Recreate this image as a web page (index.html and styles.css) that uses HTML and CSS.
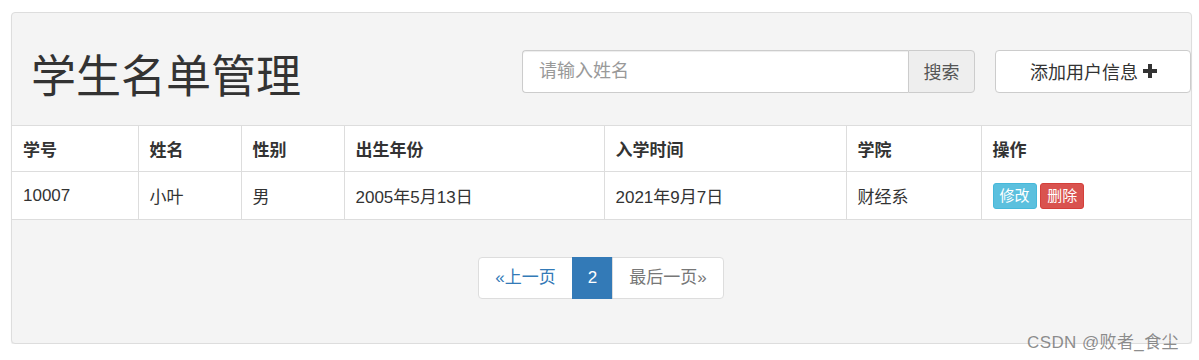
FILE: index.html
```html
<!DOCTYPE html>
<html lang="zh-CN">
<head>
    <meta charset="UTF-8">
    <title>学生名单管理</title>
    <link rel="stylesheet" href="styles.css">
</head>
<body>
    <div class="panel">
        <!-- Header: title, search and add -->
        <div class="panel-head">
            <h1 class="title">学生名单管理</h1>
            <div class="search-group">
                <input type="text" class="search-input" placeholder="请输入姓名">
                <button class="search-button">搜索</button>
            </div>
            <button class="add-button">添加用户信息
                <svg class="plus" viewBox="0 0 16 16" width="16" height="16"><path d="M6 1h4v5h5v4h-5v5H6v-5H1V6h5z" fill="#333"/></svg>
            </button>
        </div>

        <table class="student-table">
            <colgroup>
                <col style="width:126px"><col style="width:103px"><col style="width:103px">
                <col style="width:260px"><col style="width:242px"><col style="width:135px"><col>
            </colgroup>
            <thead>
                <tr>
                    <th>学号</th><th>姓名</th><th>性别</th><th>出生年份</th><th>入学时间</th><th>学院</th><th>操作</th>
                </tr>
            </thead>
            <tbody>
                <tr>
                    <td>10007</td><td>小叶</td><td>男</td><td>2005年5月13日</td><td>2021年9月7日</td><td>财经系</td>
                    <td><button class="btn-xs btn-info">修改</button> <button class="btn-xs btn-danger">删除</button></td>
                </tr>
            </tbody>
        </table>

        <div class="pager-wrap">
            <ul class="pagination">
                <li><a href="#" class="page-link">«上一页</a></li>
                <li><a href="#" class="page-link active">2</a></li>
                <li><a href="#" class="page-link muted">最后一页»</a></li>
            </ul>
        </div>
    </div>

    <div class="watermark">CSDN @败者_食尘</div>
</body>
</html>
```

FILE: styles.css
```css
body {
    margin: 0;
    padding: 12px 7px 0 11px;
    font-family: "Liberation Sans", "Noto Sans CJK SC", sans-serif;
    font-size: 16px;
    color: #333;
    background-color: #fff;
}
.panel {
    width: 1179px;
    height: 330px;
    background-color: #f4f4f4;
    border: 1px solid #ddd;
    border-radius: 4px;
    box-shadow: 0 1px 1px rgba(0, 0, 0, 0.08);
}
.panel-head {
    display: flex;
    align-items: center;
    height: 112px;
    padding: 0 0 0 19px;
}
.title {
    margin: 0;
    flex: 1;
    font-family: "Noto Sans CJK SC", sans-serif;
    font-size: 45px;
    font-weight: 400;
    line-height: 1;
    color: #333;
    padding-top: 8px;
}
.search-group {
    display: flex;
    width: 453px;
    height: 43px;
    margin: 4px 20px 0 0;
}
.search-input {
    flex: 1;
    min-width: 0;
    border: 1px solid #ccc;
    border-right: none;
    border-radius: 4px 0 0 4px;
    padding: 0 16px;
    font-family: inherit;
    font-size: 18px;
    color: #555;
    background-color: #fff;
    box-shadow: inset 0 1px 1px rgba(0, 0, 0, 0.075);
    outline: none;
}
.search-input::placeholder {
    color: #999;
}
.search-button {
    width: 67px;
    border: 1px solid #ccc;
    border-radius: 0 4px 4px 0;
    background-color: #eee;
    color: #555;
    font-family: inherit;
    font-size: 18px;
    padding: 0;
}
.add-button {
    display: flex;
    align-items: center;
    justify-content: center;
    gap: 4px;
    width: 196px;
    height: 43px;
    margin-top: 4px;
    border: 1px solid #ccc;
    border-radius: 4px;
    background-color: #fff;
    color: #333;
    font-family: inherit;
    font-size: 18px;
    padding: 0 0 0 2px;
}
.plus {
    margin-top: -1px;
}
.student-table {
    width: 100%;
    border-collapse: collapse;
    table-layout: fixed;
    background-color: #fff;
    font-size: 17px;
}
.student-table th,
.student-table td {
    text-align: left;
    border-top: 1px solid #ddd;
    border-bottom: 1px solid #ddd;
    border-left: 1px solid #ddd;
    padding: 0 11px;
    vertical-align: middle;
    white-space: nowrap;
}
.student-table th:first-child,
.student-table td:first-child {
    border-left: none;
}
.student-table th {
    height: 45px;
    font-weight: 700;
}
.student-table td {
    height: 47px;
}
.btn-xs {
    border: 1px solid transparent;
    border-radius: 3px;
    color: #fff;
    font-family: inherit;
    font-size: 15px;
    line-height: 18px;
    padding: 3px 6px;
    margin-right: -1px;
}
.btn-info {
    background-color: #5bc0de;
    border-color: #46b8da;
}
.btn-danger {
    background-color: #d9534f;
    border-color: #d43f3a;
}
.pager-wrap {
    display: flex;
    justify-content: center;
    padding-top: 37px;
}
.pagination {
    display: flex;
    list-style: none;
    margin: 0;
    padding: 0;
}
.page-link {
    display: block;
    height: 40px;
    line-height: 40px;
    padding: 0 16px;
    font-size: 17px;
    text-decoration: none;
    color: #337ab7;
    background-color: #fff;
    border: 1px solid #ddd;
    margin-left: -1px;
}
.pagination li:first-child .page-link {
    border-radius: 4px 0 0 4px;
}
.pagination li:last-child .page-link {
    border-radius: 0 4px 4px 0;
}
.page-link.active {
    color: #fff;
    background-color: #337ab7;
    border-color: #337ab7;
    padding: 0 15px;
}
.page-link.muted {
    color: #777;
}
.watermark {
    position: absolute;
    left: 1027px;
    top: 328px;
    font-size: 17px;
    color: rgba(120, 120, 120, 0.85);
    letter-spacing: 0.4px;
}
```
